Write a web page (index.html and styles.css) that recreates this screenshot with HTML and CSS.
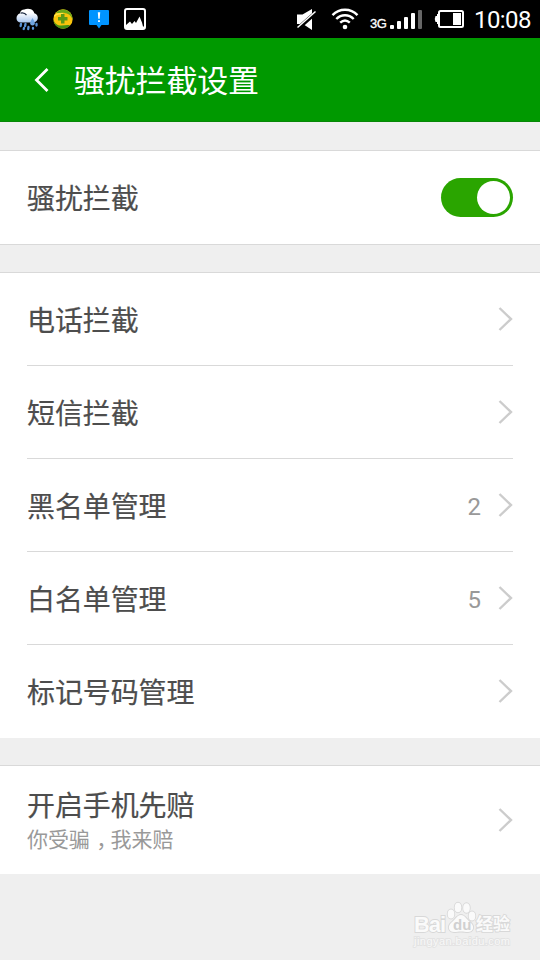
FILE: index.html
```html
<!DOCTYPE html>
<html lang="zh-CN">
<head>
  <meta charset="UTF-8">
  <title>骚扰拦截设置</title>
  <link rel="stylesheet" href="styles.css">
</head>
<body>
  <div class="status-bar">
    <div class="status-left">
      <!-- 天气 -->
      <svg class="icon-weather" width="24" height="24" viewBox="0 0 24 24">
        <defs>
          <linearGradient id="cloud" x1="0" y1="0" x2="0" y2="1">
            <stop offset="0.300" stop-color="#ffffff"/>
            <stop offset="1" stop-color="#a9c6ee"/>
          </linearGradient>
        </defs>
        <path d="M5 14.500C2 14.500 0.500 12.500 0.500 10.200 0.500 7.800 2 6 3.800 5.500 4.300 3 6 1.700 8.300 1.600 10 .5 13 .3 15 1.300 17 2.200 17.800 3.500 18.300 5.200 21 5.800 22 8 21.800 10.300 21.500 13 19.500 14.500 17 14.500z" fill="url(#cloud)"/>
        <path d="M4.500 5.200c2.500-.6 4.800.2 6 2" stroke="#1c2940" stroke-width="1.200" fill="none"/>
        <path d="M16.500 10c-1.500 2.500-2.300 4-2.300 5.300a2.300 2.300 0 0 0 4.600 0c0-1.300-.8-2.800-2.300-5.300z" fill="#6fa5df"/>
        <path d="M5 16l-.4 2M9.500 16l-.4 2M8 20l-.3 1M12.500 19l-.3 2M20.500 16v1.500M17 20v.8" stroke="#5a93d6" stroke-width="2.300" stroke-linecap="round"/>
      </svg>
      <!-- 安全卫士 -->
      <svg class="icon-guard" width="20" height="20" viewBox="0 0 20 20">
        <circle cx="10" cy="10" r="9.700" fill="#f9c40c"/>
        <path d="M3 4C7-1 14-.6 17.500 4c1.500 2 2.200 4.400 2 7-1-4-3.500-6.500-7-6.800C9 3.300 6 4 3 4z" fill="#6aa81c"/>
        <path d="M.5 10.500c1 4 4 6 7.500 6 3.500.1 6.500-1 9 0-4 4.500-11 4-14.300 0C1.200 14.800.4 12.500.5 10.500z" fill="#469116"/>
        <path d="M1.500 7.500C3 4 6 5 10 4.800" stroke="#ffe548" stroke-width="1.500" fill="none"/>
        <path d="M8 5h3.500v3h3v3.500h-3v3H8v-3H5V8h3z" fill="#5c9a16"/>
      </svg>
      <!-- 消息 -->
      <svg class="icon-message" width="20" height="19" viewBox="0 0 20 19">
        <path d="M1 0h18a1 1 0 0 1 1 1v13a1 1 0 0 1-1 1h-6.500L10 18.500 7.500 15H1a1 1 0 0 1-1-1V1a1 1 0 0 1 1-1z" fill="#0094ff"/>
        <path d="M8.800 2.200h2.400l-.5 6.500H9.300zM9.100 10.200h1.800v1.900H9.100z" fill="#fff"/>
      </svg>
      <!-- 截图 -->
      <svg class="icon-picture" width="22" height="22" viewBox="0 0 22 22">
        <rect x="1" y="1" width="20" height="20" rx="2" fill="none" stroke="#fff" stroke-width="2"/>
        <path d="M2 17l4-3.500 2 2.500 2.500-3 1.500 2L15.500 8.500l2.500 6 1 4h2v2H2z" fill="#fff"/>
      </svg>
    </div>
    <div class="status-right">
      <!-- 静音 -->
      <svg class="icon-mute" width="22" height="22" viewBox="0 0 22 22">
        <path d="M1 5.500h5.500L16 0v21l-9-6H1z" fill="#fff"/>
        <path d="M3 18.500L20.500 3" stroke="#000" stroke-width="4"/>
        <path d="M1.500 18.500L19.500 2.500" stroke="#fff" stroke-width="1.500"/>
      </svg>
      <!-- WiFi -->
      <svg class="icon-wifi" width="28" height="22" viewBox="0 0 28 22">
        <g fill="none" stroke="#fff" stroke-width="2.400">
          <path d="M1.500 7.200c7-7.300 18-7.300 25 0"/>
          <path d="M5.300 11c5-5 12.400-5 17.400 0"/>
          <path d="M9.200 14.700c3-2.800 6.600-2.800 9.600 0"/>
        </g>
        <circle cx="14" cy="19" r="2.300" fill="#fff"/>
      </svg>
      <span class="network">3G</span>
      <svg class="icon-signal" width="33" height="20" viewBox="0 0 33 20">
        <g fill="#fff">
          <rect x="0" y="15" width="4" height="4" rx="1"/>
          <rect x="7" y="11" width="4" height="8" rx="1"/>
          <rect x="14" y="7" width="4" height="12" rx="1"/>
          <rect x="21" y="3" width="4" height="16" rx="1"/>
        </g>
        <rect x="28" y="0" width="4" height="19" rx="1" fill="#666"/>
      </svg>
      <!-- 电池 -->
      <svg class="icon-battery" width="30" height="18" viewBox="0 0 30 18">
        <rect x="5" y="1" width="24" height="16" rx="1.500" fill="none" stroke="#fff" stroke-width="2"/>
        <path d="M5 4H3v2H1.500Q0 9 1.500 12H3v2h2z" fill="#fff"/>
        <rect x="19" y="3" width="8" height="12" fill="#fff"/>
      </svg>
      <span class="clock">10:08</span>
    </div>
  </div>

  <div class="header">
    <svg class="back" width="16" height="26" viewBox="0 0 16 26">
      <path d="M14.500 2L3.500 13l11 11" fill="none" stroke="#fff" stroke-width="2.800"/>
    </svg>
    <h1>骚扰拦截设置</h1>
  </div>

  <div class="group switch-group">
    <div class="row">
      <span class="label">骚扰拦截</span>
      <div class="switch"><div class="knob"></div></div>
    </div>
  </div>

  <div class="group">
    <div class="row">
      <span class="label">电话拦截</span>
      <svg class="arrow" viewBox="0 0 16 26"><path d="M2.500 2l11.500 11-11.500 11"/></svg>
    </div>
    <div class="row">
      <span class="label">短信拦截</span>
      <svg class="arrow" viewBox="0 0 16 26"><path d="M2.500 2l11.500 11-11.500 11"/></svg>
    </div>
    <div class="row">
      <span class="label">黑名单管理</span>
      <span class="count">2</span>
      <svg class="arrow" viewBox="0 0 16 26"><path d="M2.500 2l11.500 11-11.500 11"/></svg>
    </div>
    <div class="row">
      <span class="label">白名单管理</span>
      <span class="count">5</span>
      <svg class="arrow" viewBox="0 0 16 26"><path d="M2.500 2l11.500 11-11.500 11"/></svg>
    </div>
    <div class="row">
      <span class="label">标记号码管理</span>
      <svg class="arrow" viewBox="0 0 16 26"><path d="M2.500 2l11.500 11-11.500 11"/></svg>
    </div>
  </div>

  <div class="group">
    <div class="row row-tall">
      <div class="label">
        <div class="title">开启手机先赔</div>
        <div class="desc">你受骗<span class="comma">，</span>我来赔</div>
      </div>
      <svg class="arrow" viewBox="0 0 16 26"><path d="M2.500 2l11.500 11-11.500 11"/></svg>
    </div>
  </div>

  <svg class="watermark" width="110" height="50" viewBox="0 0 110 50">
    <g class="wm-shape">
      <ellipse cx="11" cy="14" rx="3.300" ry="4.500"/>
      <ellipse cx="18" cy="7.500" rx="3.300" ry="4.800"/>
      <ellipse cx="26.500" cy="8" rx="3.300" ry="4.800"/>
      <ellipse cx="32" cy="16" rx="3.300" ry="4.500"/>
      <path d="M21 15c4 0 6 5 10 8 4 4 2 9-3 9-3 0-4-.5-7-.5s-4 .5-7 .5c-5 0-7-5-3-9 4-3 6-8 10-8z"/>
    </g>
    <text class="wm-logo" x="-26" y="32" textLength="32">Bai</text>
    <text class="wm-du" x="13" y="30">du</text>
    <text class="wm-cn" x="36" y="30">经验</text>
    <text class="wm-url" x="-26" y="45" textLength="96">jingyan.baidu.com</text>
  </svg>
</body>
</html>
```

FILE: styles.css
```css
* {
  box-sizing: border-box;
}

body {
  margin: 0;
  height: 960px;
  position: relative;
  overflow: hidden;
  background: #efefef;
  font-family: Roboto, "Noto Sans CJK SC", sans-serif;
}

svg {
  display: block;
  flex: none;
}

/* 状态栏 */
.status-bar {
  height: 38px;
  background: #000;
  color: #fff;
  display: flex;
  justify-content: space-between;
  padding: 0 9px 0 16px;
}

.status-left,
.status-right {
  display: flex;
  align-items: center;
}

.icon-weather {
  margin-top: 1px;
}

.icon-guard {
  margin-left: 13px;
}

.icon-message {
  margin-left: 16px;
}

.icon-picture {
  margin-left: 15px;
}

.icon-mute {
  margin-top: 1px;
}

.icon-wifi {
  margin-left: 13px;
}

.network {
  width: 18px;
  margin: 9px 0 0 11px;
  font: 13px/16px "Liberation Sans", sans-serif;
  letter-spacing: -0.6px;
  -webkit-text-stroke: 0.3px #fff;
}

.icon-signal {
  margin-left: 2px;
  margin-top: 1px;
}

.icon-battery {
  margin-left: 11px;
}

.clock {
  width: 57px;
  margin: 1px 0 0 10px;
  font-size: 24px;
  line-height: 30px;
  letter-spacing: -0.6px;
  white-space: nowrap;
}

/* 标题栏 */
.header {
  height: 84px;
  background: #009900;
  border-bottom: 1px solid #078707;
  display: flex;
  align-items: center;
  padding-left: 33px;
}

.header h1 {
  margin: 4px 0 0 25px;
  color: #fff;
  font-size: 31px;
  line-height: 44px;
  font-weight: 400;
  letter-spacing: -0.2px;
}

/* 列表 */
.group {
  margin-top: 27px;
  padding: 0 27px;
  background: #fff;
  border-top: 1px solid #d9d9d9;
}

.switch-group {
  margin-top: 28px;
  border-bottom: 1px solid #d9d9d9;
}

.row {
  height: 93px;
  display: flex;
  align-items: center;
  border-bottom: 1px solid #d9d9d9;
}

.row:last-child {
  border-bottom-color: #fff;
}

.label {
  flex: 1;
  padding-top: 5px;
  color: #4d4d4d;
  font-size: 28px;
  line-height: 40px;
  letter-spacing: -0.1px;
  -webkit-text-stroke: 0.2px #4d4d4d;
}

.count {
  margin: 3px 16px 0 0;
  color: #999;
  font-size: 24px;
}

.arrow {
  width: 16px;
  height: 26px;
}

.arrow path {
  fill: none;
  stroke: #ccc;
  stroke-width: 2.4;
}

.row-tall {
  height: 108px;
}

.title {
  padding-top: 1px;
  line-height: 36px;
}

.desc {
  color: #999;
  font-size: 21px;
  line-height: 31px;
  -webkit-text-stroke: 0;
}

/* 逗号居中 */
.comma {
  padding: 0 4px 0 6.5px;
  font-feature-settings: "halt";
}

.switch {
  width: 72px;
  height: 39px;
  margin-top: 1px;
  padding: 3px;
  border-radius: 20px;
  background: #2aa500;
  display: flex;
  justify-content: flex-end;
}

.knob {
  width: 33px;
  height: 33px;
  border-radius: 50%;
  background: #fff;
}

/* 水印 */
.watermark {
  position: absolute;
  left: 440px;
  top: 900px;
  overflow: visible;
  fill: #fafafa;
  stroke: #d8d8d8;
  stroke-width: 1.8;
  paint-order: stroke;
}

.wm-logo {
  font: bold 22px "Liberation Sans", sans-serif;
}

.wm-du {
  font: bold 15px "Liberation Sans", sans-serif;
  fill: #d0d0d0;
  stroke: none;
}

.wm-cn {
  font: bold 17px "Noto Sans CJK SC", sans-serif;
}

.wm-url {
  font: 11px "Liberation Sans", sans-serif;
  fill: #f8f8f8;
  stroke: #e3e3e3;
}
```
